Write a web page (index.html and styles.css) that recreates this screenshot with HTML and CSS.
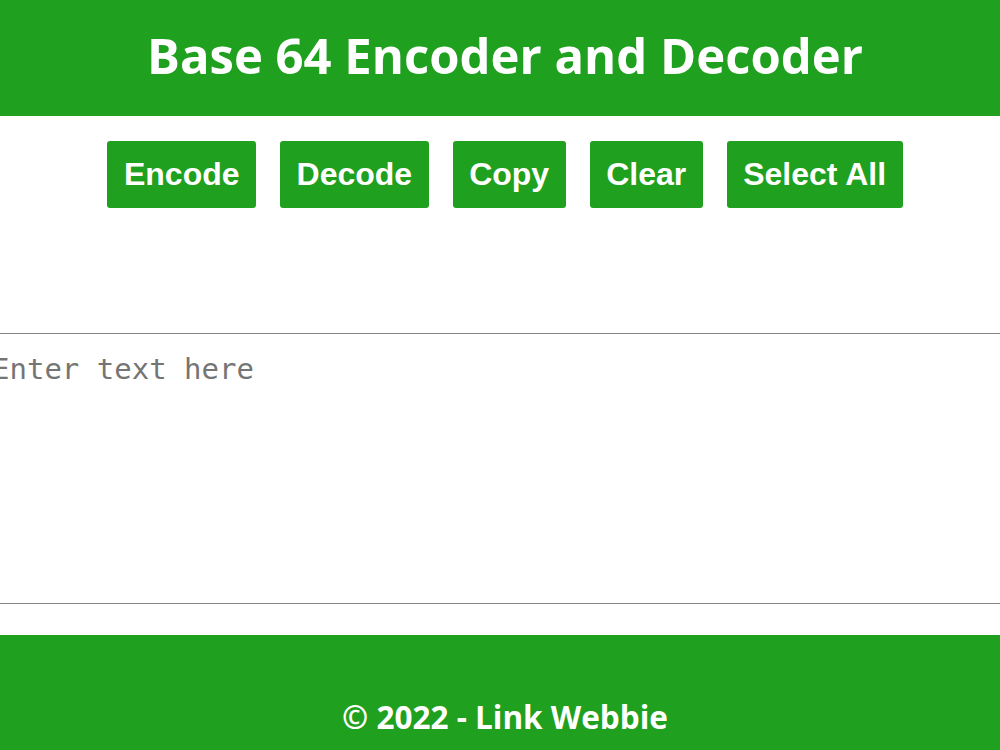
FILE: index.html
```html
<!DOCTYPE html>
<html lang="en">
<head>
<meta charset="utf-8">
<title>Base 64 Encoder and Decoder</title>
<link rel="stylesheet" href="styles.css">
</head>
<body>
<header class="site-header">
  <h1 class="title">Base 64 Encoder and Decoder</h1>
</header>
<main class="main">
  <div class="actions">
    <button class="btn">Encode</button>
    <button class="btn">Decode</button>
    <button class="btn">Copy</button>
    <button class="btn">Clear</button>
    <button class="btn">Select All</button>
  </div>
  <div class="editor">
    <textarea class="input" placeholder="Enter text here"></textarea>
  </div>
</main>
<footer class="site-footer">
  <p class="copy">© 2022 - Link Webbie</p>
</footer>
</body>
</html>
```
FILE: styles.css
```css
html, body {
  margin: 0;
  padding: 0;
  overflow: hidden;
  background: #ffffff;
}
body {
  width: 1010px;
  font-family: "Open Sans", "DejaVu Sans", sans-serif;
}
.site-header {
  background: #1fa01e;
  height: 116px;
  display: flex;
  align-items: center;
  justify-content: center;
}
.title {
  margin: 0 0 5px;
  color: #ffffff;
  font-size: 49px;
  font-weight: 700;
  line-height: 1;
}
.main {
  display: flex;
  flex-direction: column;
  align-items: center;
}
.actions {
  display: flex;
  gap: 24px;
  margin-top: 25px;
}
.btn {
  background: #1fa01e;
  color: #ffffff;
  border: none;
  border-radius: 3px;
  font-family: "Liberation Sans", Arial, sans-serif;
  font-weight: 700;
  font-size: 32px;
  height: 67px;
  padding: 0 16.5px;
  cursor: pointer;
}
.editor {
  width: 100%;
  display: flex;
  justify-content: center;
  margin-top: 125px;
}
.input {
  flex: none;
  width: 1038px;
  height: 271px;
  box-sizing: border-box;
  border: 1px solid #858585;
  padding: 18px 5px;
  font-family: "DejaVu Sans Mono", monospace;
  font-size: 29px;
  resize: none;
  outline: none;
}
.input::placeholder {
  color: #757575;
}
.site-footer {
  margin-top: 31px;
  background: #1fa01e;
  height: 140px;
  display: flex;
  justify-content: center;
  padding-top: 63px;
  box-sizing: border-box;
}
.copy {
  margin: 0;
  color: #ffffff;
  font-size: 31.5px;
  font-weight: 700;
  line-height: 1.2;
}
```
